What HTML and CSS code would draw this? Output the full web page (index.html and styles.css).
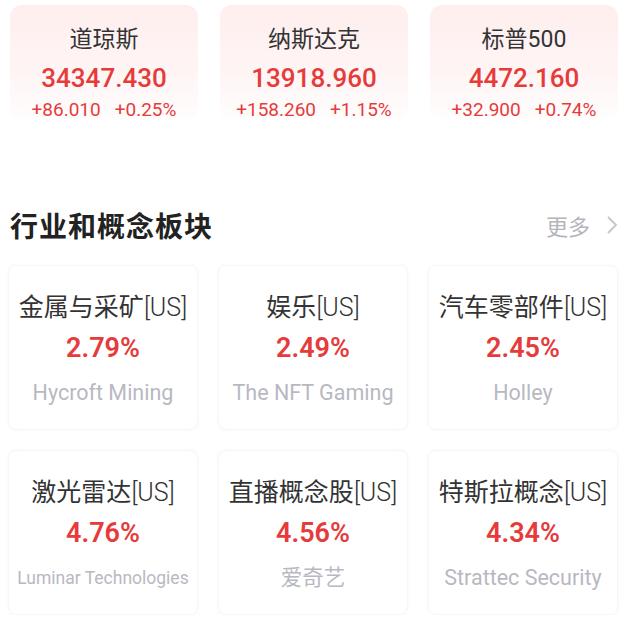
FILE: index.html
```html
<!DOCTYPE html>
<html lang="zh-CN">
<head>
  <meta charset="UTF-8" />
  <meta name="viewport" content="width=device-width, initial-scale=1.0"/>
  <title>美股行情</title>
  <link rel="stylesheet" href="styles.css">
</head>
<body>

  <div class="indices">
    <div class="index-card">
      <div class="index-name">道琼斯</div>
      <div class="index-price">34347.430</div>
      <div class="index-change"><span>+86.010</span><span>+0.25%</span></div>
    </div>
    <div class="index-card">
      <div class="index-name">纳斯达克</div>
      <div class="index-price">13918.960</div>
      <div class="index-change"><span>+158.260</span><span>+1.15%</span></div>
    </div>
    <div class="index-card">
      <div class="index-name">标普500</div>
      <div class="index-price">4472.160</div>
      <div class="index-change"><span>+32.900</span><span>+0.74%</span></div>
    </div>
  </div>

  <div class="section-head">
    <h2>行业和概念板块</h2>
    <a class="more" href="#">更多
      <svg width="12" height="20" viewBox="0 0 12 20"><polyline points="2,2 10,10 2,18" fill="none" stroke="#c4c4cc" stroke-width="1.8"/></svg>
    </a>
  </div>

  <div class="sectors">
    <div class="sector-card">
      <div class="sector-name">金属与采矿<span class="mkt">[US]</span></div>
      <div class="sector-pct">2.79%</div>
      <div class="sector-sub">Hycroft Mining</div>
    </div>
    <div class="sector-card">
      <div class="sector-name">娱乐<span class="mkt">[US]</span></div>
      <div class="sector-pct">2.49%</div>
      <div class="sector-sub">The NFT Gaming</div>
    </div>
    <div class="sector-card">
      <div class="sector-name">汽车零部件<span class="mkt">[US]</span></div>
      <div class="sector-pct">2.45%</div>
      <div class="sector-sub">Holley</div>
    </div>
    <div class="sector-card">
      <div class="sector-name">激光雷达<span class="mkt">[US]</span></div>
      <div class="sector-pct">4.76%</div>
      <div class="sector-sub long">Luminar Technologies</div>
    </div>
    <div class="sector-card">
      <div class="sector-name">直播概念股<span class="mkt">[US]</span></div>
      <div class="sector-pct">4.56%</div>
      <div class="sector-sub">爱奇艺</div>
    </div>
    <div class="sector-card">
      <div class="sector-name">特斯拉概念<span class="mkt">[US]</span></div>
      <div class="sector-pct">4.34%</div>
      <div class="sector-sub">Strattec Security</div>
    </div>
  </div>

</body>
</html>
```

FILE: styles.css
```css
body {
  font-family: Roboto, "Noto Sans CJK SC", sans-serif;
  background: #fff;
  margin: 0;
  padding: 5px 8px 0 10px;
  color: #333;
}
.indices {
  display: grid;
  grid-template-columns: repeat(3, 188px);
  column-gap: 22px;
}
.index-card {
  height: 115px;
  padding-top: 20px;
  box-sizing: border-box;
  border-radius: 12px;
  background: linear-gradient(#ffeeee, #fff5f5 60%, #fffdfd);
  text-align: center;
}
.index-name {
  font-size: 23px;
  line-height: 30px;
  color: #333;
}
.index-price {
  margin-top: 6px;
  font-size: 26px;
  font-weight: 500;
  line-height: 34px;
  color: #e63b3b;
}
.index-change {
  margin-top: 2px;
  font-size: 19px;
  line-height: 26px;
  color: #e63b3b;
  display: flex;
  justify-content: center;
  gap: 14px;
}
.section-head {
  margin-top: 85px;
  display: flex;
  align-items: center;
  justify-content: space-between;
  height: 40px;
}
h2 {
  margin: 0;
  font-size: 28px;
  font-weight: 700;
  color: #222;
  letter-spacing: 1px;
}
.more {
  display: flex;
  align-items: center;
  gap: 16px;
  font-size: 22px;
  color: #b4b4bc;
  text-decoration: none;
}
.sectors {
  margin: 20px 0 0 -2px;
  display: grid;
  grid-template-columns: repeat(3, 190px);
  column-gap: 20px;
  row-gap: 20px;
}
.sector-card {
  height: 165px;
  padding-top: 26px;
  box-sizing: border-box;
  border: 1px solid #faf5f7;
  border-radius: 8px;
  box-shadow: 0 0 3px rgba(240, 215, 228, 0.3);
  text-align: center;
}
.sector-name {
  font-size: 25px;
  line-height: 32px;
  color: #333;
}
.mkt {
  font-weight: 300;
}
.sector-pct {
  margin-top: 6px;
  font-size: 27px;
  font-weight: 600;
  line-height: 36px;
  color: #e63b3b;
}
.sector-sub {
  margin-top: 12px;
  font-size: 21.5px;
  line-height: 30px;
  color: #b8b8c2;
}
.sector-sub.long {
  font-size: 17.5px;
}
```
